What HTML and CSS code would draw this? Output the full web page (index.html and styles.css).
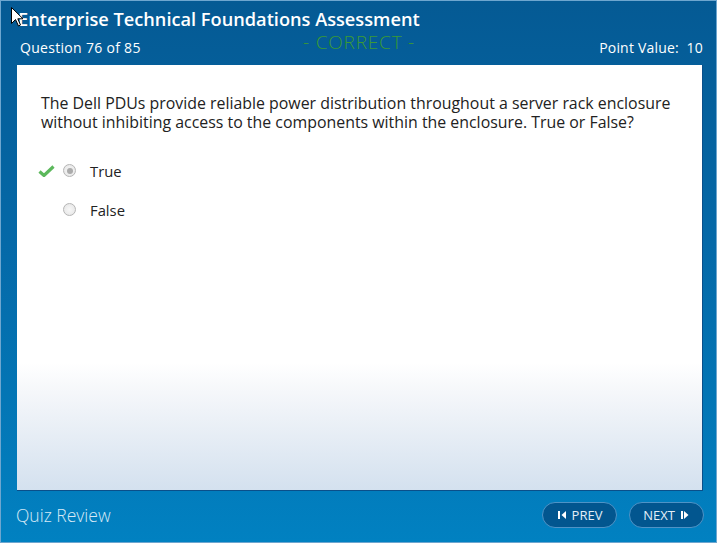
FILE: index.html
```html
<!DOCTYPE html>
<html>
<head>
<meta charset="utf-8">
<link rel="stylesheet" href="styles.css">
</head>
<body>
<div class="frame">
  <header class="head">
    <h1 class="title">Enterprise Technical Foundations Assessment</h1>
    <div class="subbar">
      <span class="qnum">Question 76 of 85</span>
      <span class="status">- CORRECT -</span>
      <span class="points">Point Value:&nbsp; 10</span>
    </div>
  </header>
  <main class="panel">
    <p class="question">The Dell PDUs provide reliable power distribution throughout a server rack enclosure without inhibiting access to the components within the enclosure. True or False?</p>
    <ul class="options">
      <li class="option">
        <span class="mark"><svg width="17" height="12" viewBox="0 0 17 12"><path d="M1.5 6.5 L6 10.5 L15.5 1.5" fill="none" stroke="#5cb85c" stroke-width="3.2" stroke-linejoin="miter"/></svg></span>
        <span class="radio checked"></span>
        <span class="label">True</span>
      </li>
      <li class="option">
        <span class="mark"></span>
        <span class="radio"></span>
        <span class="label">False</span>
      </li>
    </ul>
  </main>
  <footer class="foot">
    <span class="review">Quiz Review</span>
    <div class="nav">
      <button class="btn"><svg width="10" height="10" viewBox="0 0 10 10"><rect x="1" y="1" width="2" height="8" fill="#fff"/><path d="M9 1 L4.5 5 L9 9 Z" fill="#fff"/></svg>PREV</button>
      <button class="btn">NEXT<svg width="10" height="10" viewBox="0 0 10 10"><rect x="1" y="1" width="2" height="8" fill="#fff"/><path d="M4 1 L8.5 5 L4 9 Z" fill="#fff"/></svg></button>
    </div>
  </footer>
  <svg class="cursor" width="13" height="20" viewBox="0 0 13 20"><path d="M0.5 0.5 L0.5 16.5 L4.5 12.5 L7.5 19 L9.5 18 L6.8 11.8 L12 11.8 Z" fill="#fff" stroke="#000" stroke-width="1"/></svg>
</div>
</body>
</html>
```
FILE: styles.css
```css
* { box-sizing: border-box; }
html, body { margin: 0; padding: 0; }
body { width: 717px; height: 543px; overflow: hidden; font-family: "Open Sans", "Liberation Sans", sans-serif; }
.frame {
  position: relative;
  width: 717px; height: 543px;
  background: linear-gradient(to bottom, #055a94 0%, #0569a8 45%, #0181c1 100%);
  border: 1px solid #6ea6cf;
  display: flex; flex-direction: column;
}
.head { padding: 5px 13px 0 17px; color: #fff; }
.title { margin: 0; font-size: 18.2px; font-weight: 600; line-height: 26px; letter-spacing: 0; }
.subbar { display: flex; align-items: center; height: 33px; padding: 0 0 3px 2px; position: relative; }
.qnum { font-size: 14px; font-weight: 400; letter-spacing: 0.3px; }
.status { position: absolute; left: 285px; top: -3px; color: #3b9a34; font-size: 19px; font-weight: 300; letter-spacing: 0.8px; }
.points { margin-left: auto; font-size: 14px; letter-spacing: 0.2px; }
.panel {
  margin: 0 13px 0 16px;
  height: 426px;
  background: linear-gradient(to bottom, #ffffff 0%, #ffffff 70%, #f5f7fa 77%, #d4e1ef 100%);
  border-right: 1px solid #0a4f8a; border-bottom: 1px solid #0a4f8a;
  padding: 29px 20px 0 24px;
  color: #222;
}
.question { margin: 0; font-size: 15.9px; line-height: 19px; max-width: 640px; }
.options { list-style: none; margin: 19px 0 0 0; padding: 0; }
.option { display: flex; align-items: center; height: 39px; margin-left: -3px; }
.mark { width: 22px; display: flex; align-items: center; padding-top: 1px; }
.radio { width: 13px; height: 13px; border-radius: 50%; border: 1px solid #b5b5b5; background: radial-gradient(circle, #f7f7f7 0%, #e4e4e4 100%); margin-left: 3px; position: relative; }
.radio.checked::after { content: ""; position: absolute; left: 2.5px; top: 2.5px; width: 6px; height: 6px; border-radius: 50%; background: #ababab; }
.label { margin-left: 14px; font-size: 14.8px; }
.foot { flex: 1; display: flex; align-items: center; padding: 0 12px 4px 15px; }
.review { color: #d6e9f6; font-size: 17.5px; font-weight: 300; padding-top: 0; }
.nav { margin-left: auto; display: flex; gap: 12px; }
.btn {
  height: 26px; width: 75px; border-radius: 13px;
  background: #02568f; border: 1px solid #4f93c6; color: #e2eef8;
  font-family: "Open Sans", "Liberation Sans", sans-serif; font-size: 13px;
  display: flex; align-items: center; justify-content: center; gap: 5px; padding: 0;
}
.cursor { position: absolute; left: 10px; top: 6px; }
```
